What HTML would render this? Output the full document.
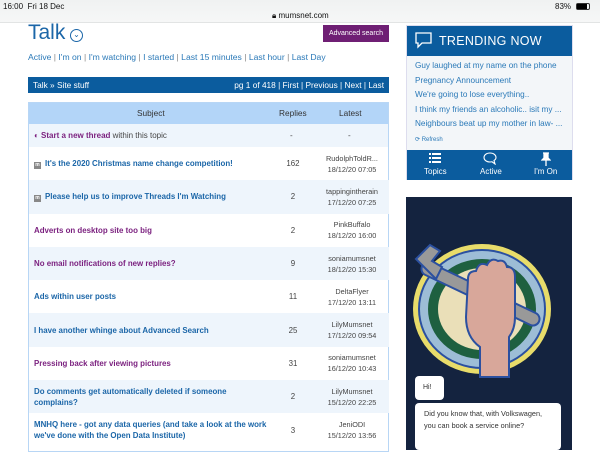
<!DOCTYPE html>
<html><head><style>
*{margin:0;padding:0;box-sizing:border-box}
body{width:600px;height:450px;overflow:hidden;background:#fff;font-family:"Liberation Sans",Arial,sans-serif;position:relative}
.abs{position:absolute}
.status{left:0;top:0;width:600px;height:23px;background:linear-gradient(#f0f2f2,#f6f7f7);border-bottom:1px solid #e2e4e4;font-size:8px;color:#111}
a{color:#2a79b8;text-decoration:none}
table{border-collapse:collapse;width:360px;font-size:7.9px}
td{height:33.3px;vertical-align:middle}
.s{padding-left:5px;font-weight:bold;color:#1b66a8;width:242px}
.s.p{color:#7a1f7e}
.r{text-align:center;color:#444;width:44px}
.l{text-align:center;color:#444;font-size:7.3px;line-height:11px}
tr.b td{background:#eef5fc}
.m{display:inline-block;width:7px;height:7px;background:#888;color:#fff;font-size:5px;line-height:7px;text-align:center;margin-right:4px;vertical-align:0px}
</style></head><body>
<div class="abs status">
<span class="abs" style="left:3px;top:2px">16:00 &nbsp;Fri 18 Dec</span>
<span class="abs" style="left:272px;top:11px;font-size:8px">🔒︎ mumsnet.com</span>
<span class="abs" style="left:555px;top:2px">83%</span>
<span class="abs" style="left:576px;top:3px;width:14px;height:7px;border:1px solid #333;border-radius:2px"><span style="display:block;width:10px;height:5px;background:#000"></span></span>
</div>
<div class="abs" style="left:28px;top:21px;font-size:21px;color:#1b66a8">Talk</div>
<div class="abs" style="left:70px;top:29px;width:13px;height:13px;border:1.3px solid #1b66a8;border-radius:50%;font-size:8px;color:#1b66a8;text-align:center;line-height:10px">⌄</div>
<div class="abs" style="left:323px;top:25px;width:66px;height:17px;background:#6f1f74;color:#fff;font-size:7px;text-align:center;line-height:17px">Advanced search</div>
<div class="abs" style="left:28px;top:52px;font-size:8.6px;color:#888"><a>Active</a> | <a>I'm on</a> | <a>I'm watching</a> | <a>I started</a> | <a>Last 15 minutes</a> | <a>Last hour</a> | <a>Last Day</a></div>
<div class="abs" style="left:28px;top:77px;width:361px;height:16px;background:#0b5c9e;color:#fff;font-size:8.3px;line-height:16px;padding:0 5px">Talk » Site stuff<span style="float:right">pg 1 of 418 | First | Previous | Next | Last</span></div>
<div class="abs" style="left:28px;top:102px;width:361px;height:350px;border:1px solid #b8d6f5">
<div style="height:21px;background:#b3d5f8;font-size:8.3px;color:#333;line-height:21px;position:relative"><span class="abs" style="left:108px">Subject</span><span class="abs" style="left:250px">Replies</span><span class="abs" style="left:310px">Latest</span></div>
<div style="height:23px;background:#eef5fc;font-size:8px;line-height:23px;padding-left:5px;color:#444;position:relative"><b style="color:#7a1f7e">◐ Start a new thread</b> within this topic<span class="abs" style="left:261px">-</span><span class="abs" style="left:319px">-</span></div>
<table>
<tr><td class="s"><span class="m">m</span>It's the 2020 Christmas name change competition!</td><td class="r">162</td><td class="l">RudolphToldR...<br>18/12/20 07:05</td></tr>
<tr class="b"><td class="s"><span class="m">m</span>Please help us to improve Threads I'm Watching</td><td class="r">2</td><td class="l">tappingintherain<br>17/12/20 07:25</td></tr>
<tr><td class="s p">Adverts on desktop site too big</td><td class="r">2</td><td class="l">PinkBuffalo<br>18/12/20 16:00</td></tr>
<tr class="b"><td class="s p">No email notifications of new replies?</td><td class="r">9</td><td class="l">soniamumsnet<br>18/12/20 15:30</td></tr>
<tr><td class="s">Ads within user posts</td><td class="r">11</td><td class="l">DeltaFlyer<br>17/12/20 13:11</td></tr>
<tr class="b"><td class="s">I have another whinge about Advanced Search</td><td class="r">25</td><td class="l">LilyMumsnet<br>17/12/20 09:54</td></tr>
<tr><td class="s p">Pressing back after viewing pictures</td><td class="r">31</td><td class="l">soniamumsnet<br>16/12/20 10:43</td></tr>
<tr class="b"><td class="s" style="line-height:11px">Do comments get automatically deleted if someone complains?</td><td class="r">2</td><td class="l">LilyMumsnet<br>15/12/20 22:25</td></tr>
<tr><td class="s" style="line-height:11px">MNHQ here - got any data queries (and take a look at the work we've done with the Open Data Institute)</td><td class="r">3</td><td class="l">JeniODI<br>15/12/20 13:56</td></tr>
</table>
</div>
<div class="abs" style="left:406px;top:25px;width:167px;height:155px;background:#f3f6f9;border:1px solid #dde">
<div style="height:30px;background:#0b5c9e;color:#fff;font-size:12.5px;line-height:30px;padding-left:32px;position:relative;letter-spacing:0.3px"><svg class="abs" style="left:8px;top:6px" width="17" height="17" viewBox="0 0 17 17"><path d="M1 1h15v10H7l-4 4v-4H1z" fill="none" stroke="#fff" stroke-width="1.3"/></svg>TRENDING NOW</div>
<div style="font-size:8.2px;line-height:14.5px;padding:3px 0 0 8px;color:#2a79b8">Guy laughed at my name on the phone<br>Pregnancy Announcement<br>We're going to lose everything..<br>I think my friends an alcoholic.. isit my ...<br>Neighbours beat up my mother in law- ...<br><span style="font-size:6px">⟳ Refresh</span></div>
<div class="abs" style="left:0;top:124px;width:165px;height:30px;background:#0b5c9e;color:#fff;font-size:8px">
<span class="abs" style="left:17px;top:17px">Topics</span><span class="abs" style="left:73px;top:17px">Active</span><span class="abs" style="left:127px;top:17px">I'm On</span>
<svg class="abs" style="left:22px;top:3px" width="12" height="11"><g fill="#fff"><rect x="0" y="0" width="2" height="2"/><rect x="3" y="0" width="9" height="2"/><rect x="0" y="4" width="2" height="2"/><rect x="3" y="4" width="9" height="2"/><rect x="0" y="8" width="2" height="2"/><rect x="3" y="8" width="9" height="2"/></g></svg>
<svg class="abs" style="left:76px;top:2px" width="14" height="13"><path d="M7 1C3.5 1 1 3 1 5.5S3.5 10 7 10c1 0 1.5 0 2-.2L12 12l-1-3.5c1.5-.8 2-1.8 2-3C13 3 10.5 1 7 1z" fill="none" stroke="#fff" stroke-width="1.1"/></svg>
<svg class="abs" style="left:134px;top:2px" width="10" height="14"><path d="M2 1h6M3 1v5L1 8h8L7 6V1M5 8v6" fill="#fff" stroke="#fff" stroke-width="1.3"/></svg></div>
</div>
<div class="abs" style="left:406px;top:197px;width:166px;height:253px;background:#14233f;overflow:hidden">
<svg class="abs" style="left:0;top:0" width="166" height="253"><ellipse cx="76" cy="112" rx="69" ry="65" fill="#e8dc6a"/><ellipse cx="76" cy="112" rx="64" ry="60" fill="#2b50a0"/><ellipse cx="76" cy="112" rx="62" ry="58" fill="#9dbdd6"/><ellipse cx="76" cy="112" rx="54" ry="50" fill="#1e6040"/><ellipse cx="76" cy="112" rx="44" ry="41" fill="#eadfb8"/>
<path d="M22 72l105 50" stroke="#2b50a0" stroke-width="15" stroke-linecap="round"/><path d="M22 72l105 50" stroke="#999" stroke-width="11" stroke-linecap="round"/><path d="M10 62l14-14 10 6-8 10 10 6-6 12z" fill="#999" stroke="#2b50a0" stroke-width="2"/>
<path d="M62 82q0-8 8-8q3-10 11-6q4-8 11-4q7-2 9 6q8 0 8 10v40q0 12-6 20v40H74v-30q-14-10-14-30z" fill="#d8a79a" stroke="#2b50a0" stroke-width="2"/></svg>
<div class="abs" style="left:9px;top:179px;width:29px;height:24px;background:#fff;border-radius:4px;font-size:7px;line-height:24px;padding-left:8px;color:#333">Hi!</div>
<div class="abs" style="left:9px;top:206px;width:146px;height:47px;background:#fff;border-radius:4px;font-size:7.3px;line-height:11.5px;padding:5px 9px;color:#333">Did you know that, with Volkswagen, you can book a service online?</div>
</div>
</body></html>
